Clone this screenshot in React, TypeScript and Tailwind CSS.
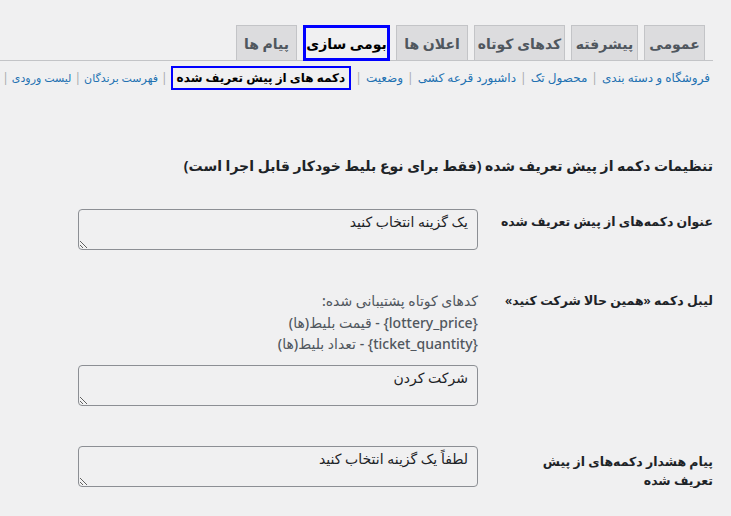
const tabs = [
  { label: "عمومی", w: "w-[61px]" },
  { label: "پیشرفته", w: "w-[67px]" },
  { label: "کدهای کوتاه", w: "w-[91px]" },
  { label: "اعلان ها", w: "w-[72px]" },
  { label: "بومی سازی", w: "w-[87px]", active: true },
  { label: "پیام ها", w: "w-[61px]" },
];

const subLinks = [
  { label: "فروشگاه و دسته بندی" },
  { label: "محصول تک" },
  { label: "داشبورد قرعه کشی" },
  { label: "وضعیت" },
];

const afterLinks = ["فهرست برندگان", "لیست ورودی"];

function Field({ value }: { value: string }) {
  return (
    <textarea
      readOnly
      defaultValue={value}
      className="block h-[41px] w-[400px] rounded-[4px] border border-[#8c8f94] bg-transparent px-[9px] pt-[2px] text-[14px] leading-[20px] font-medium text-[#1d2327] outline-none"
    />
  );
}

export default function App() {
  return (
    <div
      dir="rtl"
      className="h-[516px] w-[731px] overflow-hidden bg-[#f0f0f1] font-['Noto_Sans','DejaVu_Sans',sans-serif] text-[#1d2327]"
    >
      <div className="mr-[18px]">
        {/* tabs */}
        <div className="flex gap-[6px] border-b border-[#c3c4c7] pr-[8px] pt-[25px]">
          {tabs.map((t) =>
            t.active ? (
              <div
                key={t.label}
                className={`${t.w} -mb-px flex h-[36px] items-center justify-center whitespace-nowrap border-[3px] border-[#0000ff] bg-[#f0f0f1] text-[14px] font-bold text-black`}
              >
                {t.label}
              </div>
            ) : (
              <div
                key={t.label}
                className={`${t.w} -mb-px flex h-[36px] items-center justify-center whitespace-nowrap border border-[#c3c4c7] bg-[#dcdcde] text-[14px] font-semibold text-[#50575e]`}
              >
                {t.label}
              </div>
            ),
          )}
        </div>

        {/* sub navigation */}
        <div className="mt-[5px] flex items-center whitespace-nowrap pr-[3px] text-[12px] leading-[24px]">
          {subLinks.map((l, i) => (
            <div key={l.label} className="flex items-center">
              {i > 0 && <span className="mx-[4px] text-[#a7aaad]">|</span>}
              <span className="font-medium text-[#2271b1]">{l.label}</span>
            </div>
          ))}
          <span className="mx-[4px] text-[#a7aaad]">|</span>
          <span className="border-2 border-[#0000ff] px-[4px] font-bold leading-[20px] text-black">
            دکمه های از پیش تعریف شده
          </span>
          {afterLinks.map((l) => (
            <div key={l} className="flex items-center text-[11px]">
              <span className="mx-[3px] text-[12px] text-[#a7aaad]">|</span>
              <span className="font-medium text-[#2271b1]">{l}</span>
            </div>
          ))}
          <span className="mx-[3px] text-[#a7aaad]">|</span>
        </div>

        {/* heading */}
        <h2 className="mt-[64px] text-[14px] font-bold leading-[24px] text-[#1d2327]">
          تنظیمات دکمه از پیش تعریف شده (فقط برای نوع بلیط خودکار قابل اجرا است)
        </h2>

        {/* form */}
        <div className="mt-[31px] flex flex-col gap-[40px]">
          <div className="flex">
            <div className="w-[235px] pt-[3px] text-[12.5px] font-semibold leading-[20px] whitespace-nowrap">
              عنوان دکمه‌های از پیش تعریف شده
            </div>
            <Field value="یک گزینه انتخاب کنید" />
          </div>

          <div className="flex">
            <div className="w-[235px] text-[12.5px] font-semibold leading-[21px] whitespace-nowrap">
              لیبل دکمه «همین حالا شرکت کنید»
            </div>
            <div>
              <div className="text-[14px] font-medium leading-[21.5px] text-[#50575e]">
                <div>کدهای کوتاه پشتیبانی شده:</div>
                <div>{"{lottery_price} - قیمت بلیط(ها)"}</div>
                <div>{"{ticket_quantity} - تعداد بلیط(ها)"}</div>
              </div>
              <div className="mt-[10px]">
                <Field value="شرکت کردن" />
              </div>
            </div>
          </div>

          <div className="flex">
            <div className="w-[235px] pt-[6px] text-[12.5px] font-semibold leading-[19px]">
              پیام هشدار دکمه‌های از پیش
              <br />
              تعریف شده
            </div>
            <Field value="لطفاً یک گزینه انتخاب کنید" />
          </div>
        </div>
      </div>
    </div>
  );
}
